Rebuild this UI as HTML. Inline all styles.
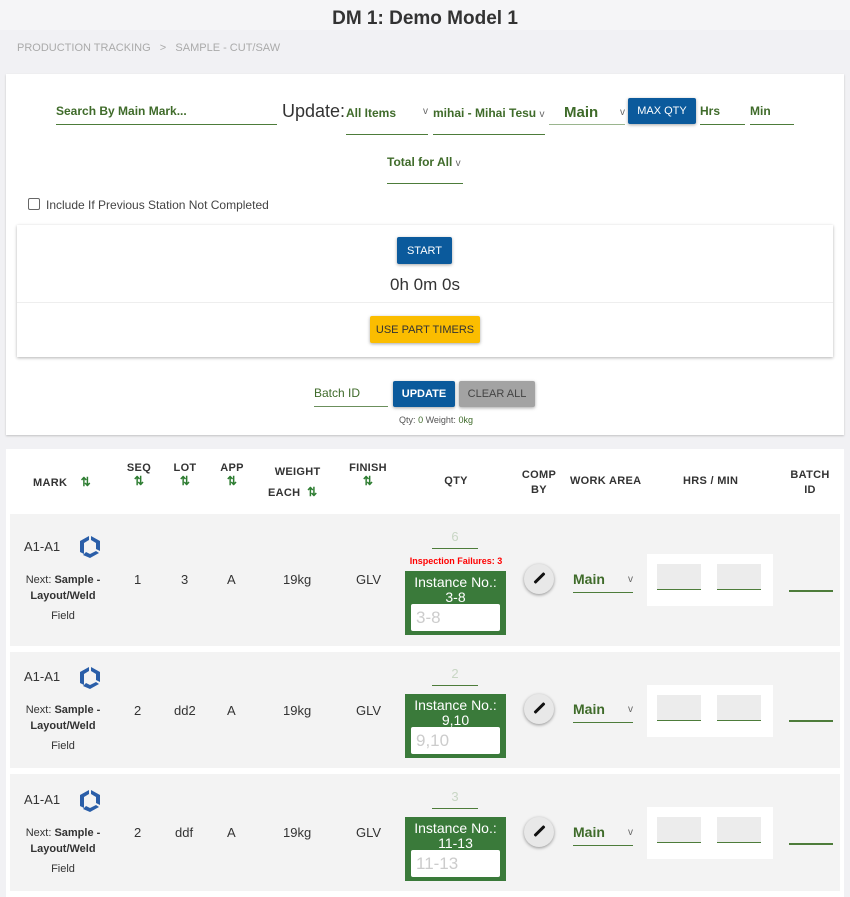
<!DOCTYPE html>
<html><head><style>
*{box-sizing:border-box;margin:0;padding:0}
body{width:850px;height:897px;background:#f1f1f4;font-family:"Liberation Sans Narrow","Liberation Sans",sans-serif;color:#333;position:relative;overflow:hidden}
.a{position:absolute}
.g{color:#3f6b2a}
.ul{border-bottom:1.5px solid #4d7c3a}
.btn{position:absolute;color:#fff;font-size:11px;display:flex;align-items:center;justify-content:center;border-radius:2px;box-shadow:0 1px 3px rgba(0,0,0,.35)}
.c{text-align:center}
.hd{font-size:11px;font-weight:bold;color:#333;letter-spacing:.3px}
.ar{color:#2e7d32;font-size:12px;font-weight:bold}
.row{position:absolute;left:10px;width:830px;background:#f3f3f3}
.inst{position:absolute;background:#3a7a3a;color:#fff;font-size:14px;text-align:center;line-height:15px}
.inst .box{position:absolute;left:6px;right:6px;background:#fff;border-radius:2px;color:#ccc;font-size:17px;text-align:left;padding-left:5px}
.pen{position:absolute;width:30px;height:30px;border-radius:50%;background:#e8e8e8;box-shadow:0 1px 3px rgba(0,0,0,.4)}
.pen::after{content:"";position:absolute;left:14px;top:7px;width:3px;height:14px;background:#111;transform:rotate(45deg);border-radius:1px}
.hm{position:absolute;background:#fff;width:126px;height:52px}
.hm i{position:absolute;top:10px;width:44px;height:26px;background:#ececec;border-bottom:1.5px solid #4d7c3a}
.q{color:#c8d6c4}
</style></head><body>
<div class="a" style="left:0;top:0;width:850px;height:30px;background:#f5f5f7"></div>
<div class="a c" style="left:0;top:8px;width:850px;font-size:19px;font-weight:bold;color:#333">DM 1: Demo Model 1</div>
<div class="a" style="left:17px;top:42px;font-size:11px;color:#aaa">PRODUCTION TRACKING &nbsp;&nbsp;&gt;&nbsp;&nbsp; SAMPLE - CUT/SAW</div>

<div class="a" style="left:6px;top:74px;width:838px;height:361px;background:#fff;box-shadow:0 1px 2px rgba(0,0,0,.2)"></div>
<div class="a g ul" style="left:56px;top:104px;width:221px;height:21px;font-size:12px;font-weight:bold">Search By Main Mark...</div>
<div class="a" style="left:282px;top:101px;font-size:18px;color:#333">Update:</div>
<div class="a g ul" style="left:346px;top:106px;width:82px;height:29px;font-size:12px;font-weight:bold">All Items <span style="float:right;font-weight:normal;color:#666;font-size:10px">v</span></div>
<div class="a g ul" style="left:433px;top:106px;width:112px;height:29px;font-size:12px;font-weight:bold">mihai - Mihai Tesu <span style="font-weight:normal;color:#666;font-size:10px">v</span></div>
<div class="a g" style="left:549px;top:104px;width:76px;height:21px;border-bottom:1px solid #9ab58e;font-size:15px;font-weight:bold;padding-left:15px">Main <span style="float:right;font-weight:normal;color:#666;font-size:10px;margin-top:3px">v</span></div>
<div class="btn" style="left:628px;top:98px;width:68px;height:26px;background:#0b5a9c">MAX QTY</div>
<div class="a g ul" style="left:700px;top:104px;width:45px;height:21px;font-size:12px;font-weight:bold">Hrs</div>
<div class="a g ul" style="left:750px;top:104px;width:44px;height:21px;font-size:12px;font-weight:bold">Min</div>
<div class="a g ul" style="left:387px;top:155px;width:76px;height:29px;font-size:12px;font-weight:bold">Total for All <span style="font-weight:normal;color:#666;font-size:10px">v</span></div>
<div class="a" style="left:28px;top:198px;width:12px;height:12px;border:1.5px solid #666;border-radius:2px"></div>
<div class="a" style="left:46px;top:198px;font-size:12px;color:#444">Include If Previous Station Not Completed</div>

<div class="a" style="left:17px;top:225px;width:816px;height:132px;background:#fff;box-shadow:0 1px 3px rgba(0,0,0,.3)"></div>
<div class="a" style="left:17px;top:302px;width:816px;height:1px;background:#eee"></div>
<div class="btn" style="left:397px;top:237px;width:55px;height:27px;background:#0b5a9c">START</div>
<div class="a c" style="left:0;top:275px;width:850px;font-size:17px;color:#333">0h 0m 0s</div>
<div class="btn" style="left:370px;top:316px;width:110px;height:27px;background:#fbbd00;color:#333">USE PART TIMERS</div>

<div class="a g" style="left:314px;top:386px;width:74px;height:21px;border-bottom:1.5px solid #6b8f5c;font-size:12px">Batch ID</div>
<div class="btn" style="left:393px;top:381px;width:62px;height:26px;background:#0b5a9c;font-weight:bold">UPDATE</div>
<div class="btn" style="left:459px;top:381px;width:76px;height:26px;background:#a3a3a3;color:#444">CLEAR ALL</div>
<div class="a c" style="left:0;top:415px;width:872px;font-size:9px;color:#555">Qty: <span class="g">0</span> Weight: <span class="g">0kg</span></div>

<div class="a" style="left:6px;top:449px;width:838px;height:448px;background:#fff"></div>
<div class="a hd" style="left:33px;top:475px">MARK &nbsp;&nbsp;&nbsp;<span class="ar">⇅</span></div>
<div class="a hd c" style="left:124px;top:462px;width:30px">SEQ<br><span class="ar">⇅</span></div>
<div class="a hd c" style="left:170px;top:462px;width:30px">LOT<br><span class="ar">⇅</span></div>
<div class="a hd c" style="left:217px;top:462px;width:30px">APP<br><span class="ar">⇅</span></div>
<div class="a hd" style="left:268px;top:462px;line-height:20px">&nbsp;&nbsp;WEIGHT<br>EACH &nbsp;<span class="ar">⇅</span></div>
<div class="a hd c" style="left:346px;top:462px;width:44px">FINISH<br><span class="ar">⇅</span></div>
<div class="a hd c" style="left:436px;top:475px;width:40px">QTY</div>
<div class="a hd c" style="left:519px;top:468px;width:40px;line-height:15px">COMP<br>BY</div>
<div class="a hd" style="left:570px;top:475px">WORK AREA</div>
<div class="a hd" style="left:683px;top:475px">HRS / MIN</div>
<div class="a hd c" style="left:790px;top:468px;width:40px;line-height:15px">BATCH<br>ID</div>

<div class="row" style="top:514px;height:132px"></div>
<div class="row" style="top:652px;height:116px"></div>
<div class="row" style="top:774px;height:117px"></div>

<!-- row1 -->
<div class="a" style="left:24px;top:539px;font-size:13px">A1-A1</div>
<svg class="a" style="left:79px;top:535px" width="22" height="24" viewBox="0 0 22 24"><g fill="#2a5ea8"><path d="M10 1 L1 6 V17 L5 19 V8 L10 5 Z"/><path d="M12 1 L21 6 V16 L17 14 V8 L12 5 Z"/><path d="M4 20 L11 23 L20 18 L17 16 L11 19 L7 17 Z"/></g></svg>
<div class="a c" style="left:20px;top:572px;width:86px;font-size:11px;line-height:16px">Next: <b>Sample - Layout/Weld</b></div>
<div class="a c" style="left:20px;top:610px;width:86px;font-size:11px">Field</div>
<div class="a" style="left:134px;top:572px;font-size:13px">1</div>
<div class="a" style="left:181px;top:572px;font-size:13px">3</div>
<div class="a" style="left:227px;top:572px;font-size:13px">A</div>
<div class="a" style="left:283px;top:572px;font-size:13px">19kg</div>
<div class="a" style="left:356px;top:572px;font-size:13px">GLV</div>
<div class="a c q" style="left:432px;top:529px;width:46px;height:20px;border-bottom:1.5px solid #4d7c3a;font-size:13px">6</div>
<div class="a c" style="left:400px;top:556px;width:112px;font-size:9px;color:#f00;font-weight:bold">Inspection Failures: 3</div>
<div class="inst" style="left:405px;top:571px;width:101px;height:64px;padding-top:4px">Instance No.:<br>3-8<div class="box" style="top:33px;height:27px;line-height:27px">3-8</div></div>
<div class="pen" style="left:524px;top:564px"></div>
<div class="a g ul" style="left:573px;top:571px;width:60px;height:22px;font-size:14px;font-weight:bold">Main <span style="float:right;font-weight:normal;color:#666;font-size:10px;margin-top:3px">v</span></div>
<div class="hm" style="left:647px;top:554px"><i style="left:10px"></i><i style="left:70px"></i></div>
<div class="a" style="left:789px;top:590px;width:44px;height:1.5px;background:#4d7c3a"></div>
<!-- row2 -->
<div class="a" style="left:24px;top:669px;font-size:13px">A1-A1</div>
<svg class="a" style="left:79px;top:666px" width="22" height="24" viewBox="0 0 22 24"><g fill="#2a5ea8"><path d="M10 1 L1 6 V17 L5 19 V8 L10 5 Z"/><path d="M12 1 L21 6 V16 L17 14 V8 L12 5 Z"/><path d="M4 20 L11 23 L20 18 L17 16 L11 19 L7 17 Z"/></g></svg>
<div class="a c" style="left:20px;top:702px;width:86px;font-size:11px;line-height:16px">Next: <b>Sample - Layout/Weld</b></div>
<div class="a c" style="left:20px;top:740px;width:86px;font-size:11px">Field</div>
<div class="a" style="left:134px;top:703px;font-size:13px">2</div>
<div class="a" style="left:174px;top:703px;font-size:13px">dd2</div>
<div class="a" style="left:227px;top:703px;font-size:13px">A</div>
<div class="a" style="left:283px;top:703px;font-size:13px">19kg</div>
<div class="a" style="left:356px;top:703px;font-size:13px">GLV</div>
<div class="a c q" style="left:432px;top:666px;width:46px;height:20px;border-bottom:1.5px solid #4d7c3a;font-size:13px">2</div>
<div class="inst" style="left:405px;top:694px;width:101px;height:64px;padding-top:4px">Instance No.:<br>9,10<div class="box" style="top:33px;height:27px;line-height:27px">9,10</div></div>
<div class="pen" style="left:524px;top:694px"></div>
<div class="a g ul" style="left:573px;top:701px;width:60px;height:22px;font-size:14px;font-weight:bold">Main <span style="float:right;font-weight:normal;color:#666;font-size:10px;margin-top:3px">v</span></div>
<div class="hm" style="left:647px;top:685px"><i style="left:10px"></i><i style="left:70px"></i></div>
<div class="a" style="left:789px;top:720px;width:44px;height:1.5px;background:#4d7c3a"></div>
<!-- row3 -->
<div class="a" style="left:24px;top:792px;font-size:13px">A1-A1</div>
<svg class="a" style="left:79px;top:789px" width="22" height="24" viewBox="0 0 22 24"><g fill="#2a5ea8"><path d="M10 1 L1 6 V17 L5 19 V8 L10 5 Z"/><path d="M12 1 L21 6 V16 L17 14 V8 L12 5 Z"/><path d="M4 20 L11 23 L20 18 L17 16 L11 19 L7 17 Z"/></g></svg>
<div class="a c" style="left:20px;top:825px;width:86px;font-size:11px;line-height:16px">Next: <b>Sample - Layout/Weld</b></div>
<div class="a c" style="left:20px;top:863px;width:86px;font-size:11px">Field</div>
<div class="a" style="left:134px;top:825px;font-size:13px">2</div>
<div class="a" style="left:175px;top:825px;font-size:13px">ddf</div>
<div class="a" style="left:227px;top:825px;font-size:13px">A</div>
<div class="a" style="left:283px;top:825px;font-size:13px">19kg</div>
<div class="a" style="left:356px;top:825px;font-size:13px">GLV</div>
<div class="a c q" style="left:432px;top:789px;width:46px;height:20px;border-bottom:1.5px solid #4d7c3a;font-size:13px">3</div>
<div class="inst" style="left:405px;top:817px;width:101px;height:64px;padding-top:4px">Instance No.:<br>11-13<div class="box" style="top:33px;height:27px;line-height:27px">11-13</div></div>
<div class="pen" style="left:524px;top:817px"></div>
<div class="a g ul" style="left:573px;top:824px;width:60px;height:22px;font-size:14px;font-weight:bold">Main <span style="float:right;font-weight:normal;color:#666;font-size:10px;margin-top:3px">v</span></div>
<div class="hm" style="left:647px;top:807px"><i style="left:10px"></i><i style="left:70px"></i></div>
<div class="a" style="left:789px;top:843px;width:44px;height:1.5px;background:#4d7c3a"></div>
</body></html>
